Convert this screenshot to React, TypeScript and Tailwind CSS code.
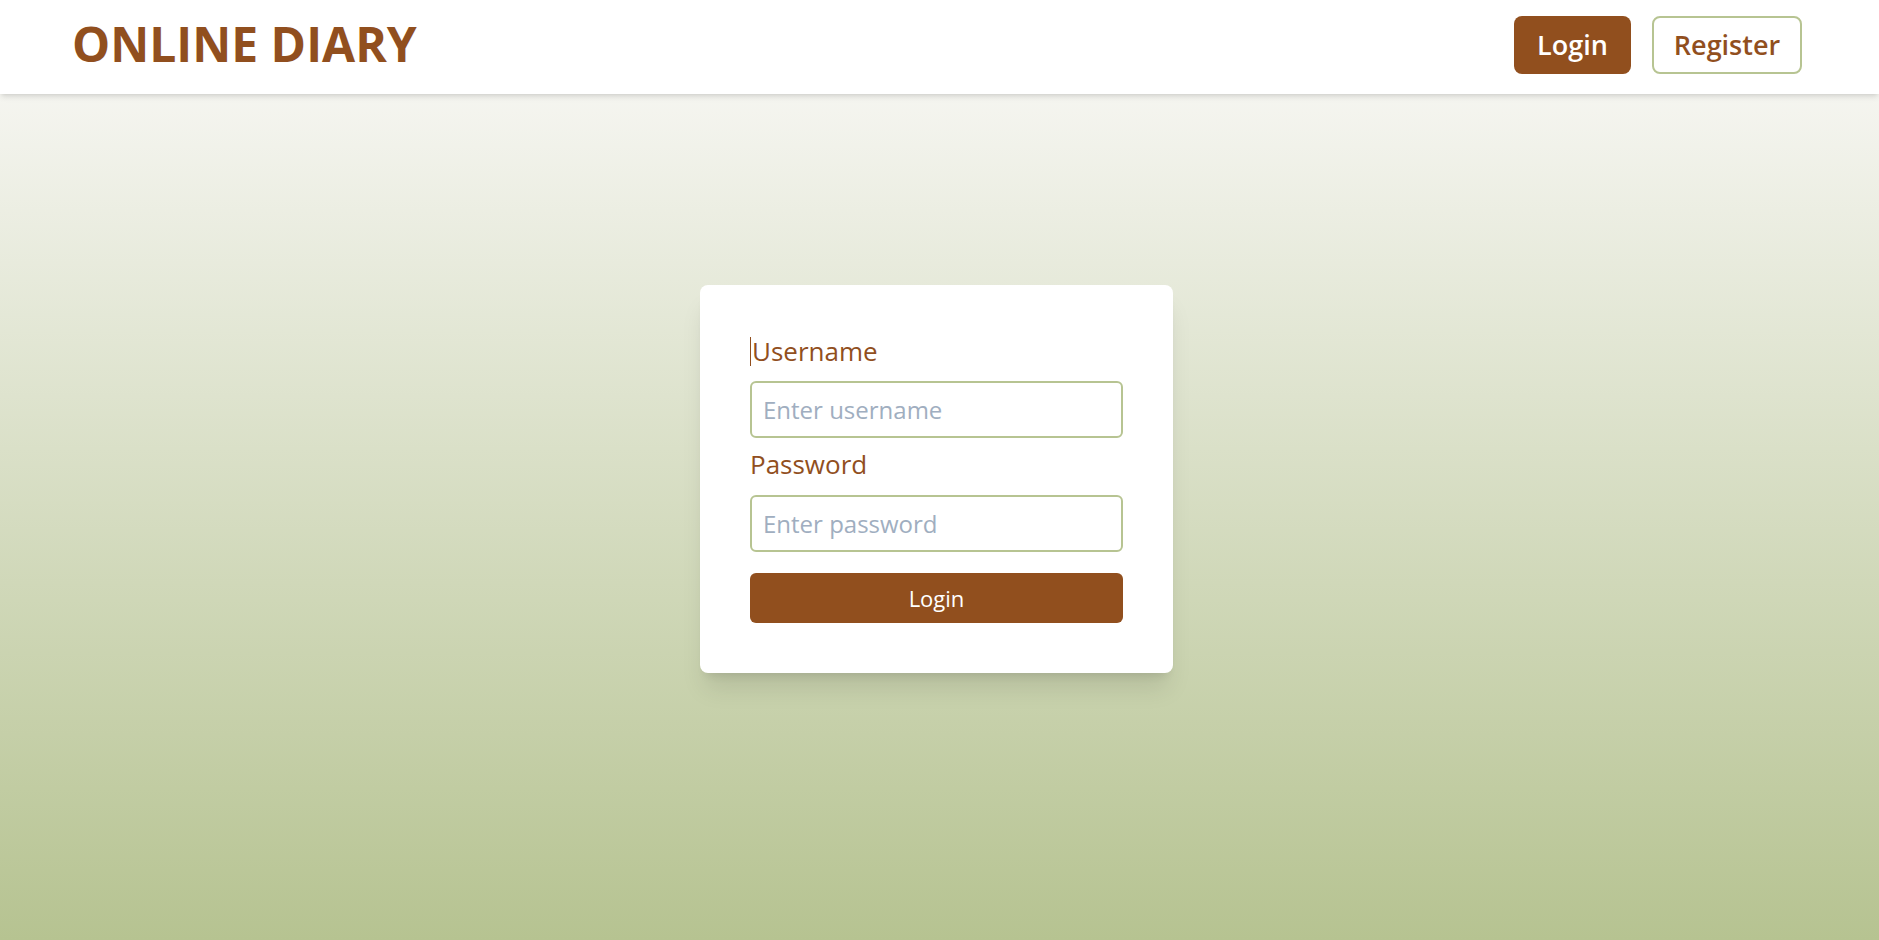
export default function App() {
  return (
    <div
      className="min-h-screen w-full"
      style={{ fontFamily: '"Open Sans", "Noto Sans", sans-serif' }}
    >
      <header className="relative z-10 flex h-[94px] items-center justify-between bg-white pl-[72px] pr-[77px] shadow-md">
        <h1 className="mb-[7px] text-[48px] leading-none font-bold text-[#914f1e]">
          ONLINE DIARY
        </h1>
        <nav className="mb-[4px] flex items-center gap-[21px]">
          <button className="h-[58px] w-[117px] rounded-lg bg-[#914f1e] text-[27px] font-semibold text-white">
            Login
          </button>
          <button className="h-[58px] w-[150px] rounded-lg border-2 border-[#b7c492] bg-white text-[27px] font-semibold text-[#914f1e]">
            Register
          </button>
        </nav>
      </header>

      <main className="flex justify-center bg-gradient-to-b from-[#f5f5f0] to-[#b6c391] pt-[191px] pr-[6px] pb-[267px]">
        <form className="flex w-[473px] flex-col rounded-lg bg-white px-[50px] pt-[50px] pb-[50px] shadow-xl">
          <label className="relative mb-[14px] pl-[2px] text-[26px] leading-[32px] text-[#914f1e]">
            <span className="absolute top-[2px] left-0 h-[29px] w-px bg-[#914f1e]" />
            Username
          </label>
          <input
            className="h-[57px] rounded-md border-2 border-[#b7c492] px-[11px] text-[24px] text-gray-700 outline-none placeholder:text-[#a0aec0]"
            placeholder="Enter username"
          />
          <label className="mt-[10px] mb-[15px] text-[26px] leading-[32px] text-[#914f1e]">
            Password
          </label>
          <input
            type="password"
            className="h-[57px] rounded-md border-2 border-[#b7c492] px-[11px] text-[24px] text-gray-700 outline-none placeholder:text-[#a0aec0]"
            placeholder="Enter password"
          />
          <button
            type="button"
            className="mt-[21px] h-[50px] rounded-md bg-[#914f1e] text-[22px] font-medium text-white"
          >
            Login
          </button>
        </form>
      </main>
    </div>
  );
}
